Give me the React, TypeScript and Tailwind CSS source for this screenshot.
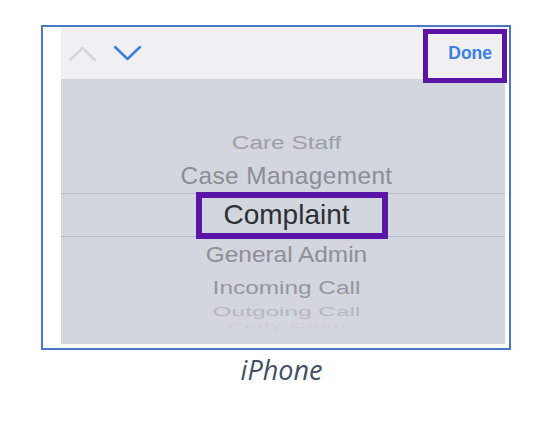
import React from "react";

const rows = [
  { label: "Care Staff", h: "h-[33px]", cls: "text-[#9da0a7] scale-y-[0.76]" },
  { label: "Case Management", h: "h-[33px]", cls: "text-[#8b8e95] tracking-[0.4px]" },
];

const below = [
  { label: "General Admin", h: "h-[36px]", cls: "text-[#8d9096] scale-y-[0.91]" },
  { label: "Incoming Call", h: "h-[31px]", cls: "text-[#94979d] scale-y-[0.74]" },
  { label: "Outgoing Call", h: "h-[17px]", cls: "text-[#b5b8bf] scale-y-[0.52]" },
  { label: "Petty Cash", h: "h-[8px]", cls: "text-[#cbced5] scale-y-[0.3]" },
];

function Chevron({ up, color }: { up?: boolean; color: string }) {
  return (
    <svg width="27" height="15" viewBox="0 0 27 15" fill="none">
      <polyline
        points={up ? "1,14 13.5,2 26,14" : "1,1 13.5,13 26,1"}
        stroke={color}
        strokeWidth="2.5"
        strokeLinecap="round"
        strokeLinejoin="round"
      />
    </svg>
  );
}

function Row({ label, h, cls }: { label: string; h: string; cls: string }) {
  return (
    <div className={`${h} flex items-center justify-center pl-[7px]`}>
      <span className={`text-[24.4px] leading-none whitespace-nowrap ${cls}`}>{label}</span>
    </div>
  );
}

export default function App() {
  return (
    <div className="w-[536px] h-[426px] bg-white pt-[25px] pl-[41px] font-['Liberation_Sans',Arial,sans-serif]">
      <div className="relative w-[470px] h-[325px] border-2 border-[#4a78c8] flex bg-white">
        <div className="w-[18px]" />
        <div className="w-[444px] flex flex-col">
          <div className="h-[52px] bg-[#f0f0f3] flex items-center justify-between pl-[8px] pr-[13px]">
            <div className="flex items-center gap-[18px] pt-[1px]">
              <Chevron up color="#d6d7db" />
              <Chevron color="#3d7ddd" />
            </div>
            <span className="text-[17.5px] font-bold text-[#3c80e4]">Done</span>
          </div>
          <div className="relative h-[265px] bg-[#d2d6de] flex flex-col pt-[48px] overflow-hidden">
            {rows.map((r) => (
              <Row key={r.label} {...r} />
            ))}
            <div className="h-[44px] border-y border-[#b9bdc6] flex items-center justify-center pl-[7px]">
              <span className="text-[28px] leading-none text-[#2e2f33]">Complaint</span>
            </div>
            {below.map((r) => (
              <Row key={r.label} {...r} />
            ))}
            <div className="absolute left-[135px] top-[113px] w-[192px] h-[47px] border-[6px] border-[#5a14a6]" />
          </div>
        </div>
        <div className="absolute left-[380px] top-[2px] w-[84px] h-[54px] border-[5px] border-[#5a14a6]" />
      </div>
      <div className="w-[470px] mt-[4px] pl-[11px] text-center font-['Open_Sans',sans-serif] italic text-[27px] leading-[32px] text-[#3f4f66]">
        iPhone
      </div>
    </div>
  );
}
